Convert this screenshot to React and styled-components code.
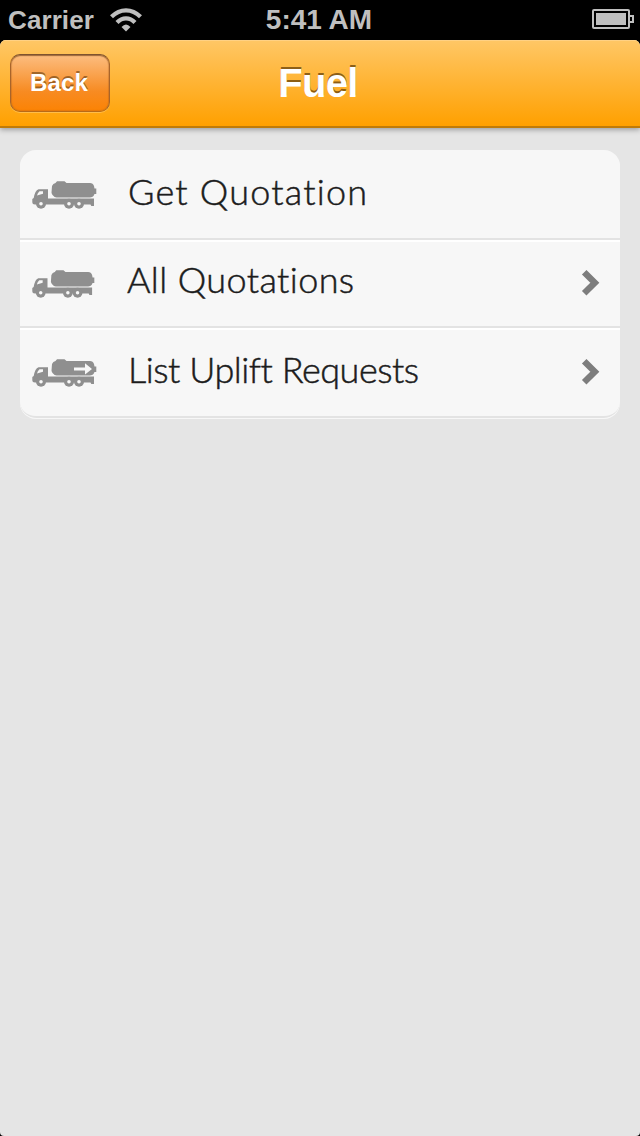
import React from "react";
import styled, { createGlobalStyle } from "styled-components";

const GlobalStyle = createGlobalStyle`
  * { box-sizing: border-box; }
  body { margin: 0; background: #000; }
`;

const Screen = styled.div`
  width: 640px;
  height: 1136px;
  display: flex;
  flex-direction: column;
  overflow: hidden;
  background: #000;
  font-family: "Liberation Sans", Arial, sans-serif;
`;

const StatusBar = styled.header`
  height: 40px;
  flex: none;
  display: grid;
  grid-template-columns: 1fr auto 1fr;
  align-items: center;
  padding: 0 6px 0 8px;
  color: #bfbfbf;
  font-weight: bold;
  line-height: 40px;
`;

const Carrier = styled.div`
  display: flex;
  align-items: center;
  gap: 16px;
  font-size: 26px;
  letter-spacing: 0.1px;
`;

const Clock = styled.div`
  margin-right: 4px;
  font-size: 28px;
  letter-spacing: 0;
`;

const BatterySlot = styled.div`
  display: flex;
  justify-content: flex-end;
  padding-bottom: 2px;
`;

const View = styled.main`
  flex: 1;
  border-radius: 6px 6px 4px 4px;
  background: #e5e5e5;
  overflow: hidden;
`;

const NavBar = styled.nav`
  height: 88px;
  display: grid;
  grid-template-columns: 100px 1fr 100px;
  padding: 14px 10px 0;
  border-bottom: 2px solid #c07b08;
  background: linear-gradient(#ffc766, #ffa000);
  box-shadow: inset 0 1px 0 #ffd184, 0 2px 5px rgba(0, 0, 0, 0.3);
`;

const BackButton = styled.button`
  width: 100px;
  height: 58px;
  padding: 0 3px 1px 1px;
  border: 1px solid;
  border-color: #80532e #a9642a #b86a18;
  border-radius: 10px;
  background: linear-gradient(#fcbd80, #f78b22 65%, #fc8304) padding-box;
  box-shadow: inset 0 1px 1px rgba(110, 65, 30, 0.6), inset 0 0 1px 1px rgba(160, 90, 30, 0.25), 0 1px 0 rgba(255, 200, 100, 0.7);
  color: #fff;
  font: bold 24px/54px "Liberation Sans", Arial, sans-serif;
  letter-spacing: 0.1px;
  text-shadow: 0 -2px 0 rgba(100, 60, 15, 0.6);
`;

const Title = styled.h1`
  margin: 0;
  padding-right: 4px;
  color: #fff;
  font-size: 40px;
  line-height: 58px;
  text-align: center;
  letter-spacing: -0.7px;
  text-shadow: 0 -2px 0 rgba(90, 55, 5, 0.7);
`;

const Menu = styled.ul`
  margin: 22px 20px 0;
  padding: 0;
  list-style: none;
  border-radius: 16px;
  background: #f7f7f7;
  box-shadow: 0 1px 0 #f7f7f7;
  overflow: hidden;
`;

const MenuItem = styled.li`
  height: ${({ $height }) => $height}px;
  display: flex;
  align-items: center;
  padding: 0 20px 0 12px;
  border-bottom: 2px solid #e3e3e3;

  & + & { box-shadow: inset 0 2px 0 #fff; }
  &:last-child { border-radius: 0 0 16px 16px; }
`;

const IconSlot = styled.span`
  width: 96px;
  display: flex;
  padding-top: 1px;
`;

const Label = styled.span`
  flex: 1;
  color: #1c1c1c;
  font-family: Lato, "Liberation Sans", sans-serif;
  font-weight: 300;
  font-size: 36px;
  line-height: 44px;
  white-space: nowrap;
  -webkit-text-stroke: 0.5px #1c1c1c;
  letter-spacing: ${({ $spacing }) => $spacing}px;
  margin-left: ${({ $shift }) => $shift || 0}px;
  padding-bottom: ${({ $lift }) => $lift}px;
`;

const LinkArrow = styled.svg`
  width: 19px;
  height: 28px;
  fill: none;
  stroke: #7d7d7d;
  stroke-width: 6.4px;
`;

function Truck({ arrow, width = 65 }) {
  return (
    <svg width={width} height="28" viewBox="0 0 65 28" preserveAspectRatio="none" fill="#8f8f8f">
      <path d="M20 5Q21 2.3 23.5 2L25 .3H32.5L34.5 2H58Q61 2 62 5L62.5 7.5H64.3V13H62.5L61.5 15Q60.5 16.4 58 16.4H24.5Q22.5 16.4 21 14.5Q19.5 12.8 19.5 11.5Z" />
      <path fillRule="evenodd" d="M6.5 8.2H16V17.4H62V25H59.3L58.5 23.5H3Q.3 23.5 .3 21V18L1.7 17Q3 9.5 6.5 8.2ZM7.5 10.2Q5.5 12 5 14.5L11 12.8V10.2Z" />
      {[9, 37, 47].map((x) => (
        <g key={x}>
          <circle cx={x} cy="22.8" r="5" />
          <circle cx={x} cy="22.8" r="1.8" fill="#f7f7f7" />
        </g>
      ))}
      {arrow && <path fill="#f7f7f7" d="M42 8.6H53V4.3L60 10L53 15.5V11.4H42Z" />}
    </svg>
  );
}

function Wifi() {
  return (
    <svg width="32" height="24" viewBox="0 0 32 24" fill="none" stroke="#bfbfbf" strokeWidth="4.2">
      <path d="M1.5 8.8Q8 2.3 16 2.3T30.5 8.8" />
      <path d="M7 14.5Q11 10.4 16 10.4T25 14.5" />
      <path fill="#bfbfbf" stroke="none" d="M11.5 19Q16 13.8 20.5 19L16 23.4Z" />
    </svg>
  );
}

function Battery() {
  return (
    <svg width="42" height="20" viewBox="0 0 42 20" fill="none" stroke="#bfbfbf" strokeWidth="2">
      <rect x="1" y="1" width="36" height="18" rx="1" />
      <rect x="4" y="4" width="30" height="12" fill="#bfbfbf" stroke="none" />
      <path d="M38 7H41V13H38" />
    </svg>
  );
}

function Chevron() {
  return (
    <LinkArrow viewBox="0 0 19 28">
      <path d="M3.2 3.2L13.8 13.7L3.2 24.2" />
    </LinkArrow>
  );
}

const items = [
  { label: "Get Quotation", height: 90, spacing: 1.2, lift: 6 },
  { label: "All Quotations", height: 88, spacing: 0.4, lift: 8, shift: -1, iconWidth: 63, link: true },
  { label: "List Uplift Requests", height: 90, spacing: -0.48, lift: 6, arrow: true, link: true },
];

export default function App() {
  return (
    <Screen>
      <GlobalStyle />
      <StatusBar>
        <Carrier>Carrier<Wifi /></Carrier>
        <Clock>5:41 AM</Clock>
        <BatterySlot><Battery /></BatterySlot>
      </StatusBar>
      <View>
        <NavBar>
          <BackButton>Back</BackButton>
          <Title>Fuel</Title>
        </NavBar>
        <Menu>
          {items.map((item) => (
            <MenuItem key={item.label} $height={item.height}>
              <IconSlot><Truck arrow={item.arrow} width={item.iconWidth} /></IconSlot>
              <Label $spacing={item.spacing} $lift={item.lift} $shift={item.shift}>{item.label}</Label>
              {item.link && <Chevron />}
            </MenuItem>
          ))}
        </Menu>
      </View>
    </Screen>
  );
}
